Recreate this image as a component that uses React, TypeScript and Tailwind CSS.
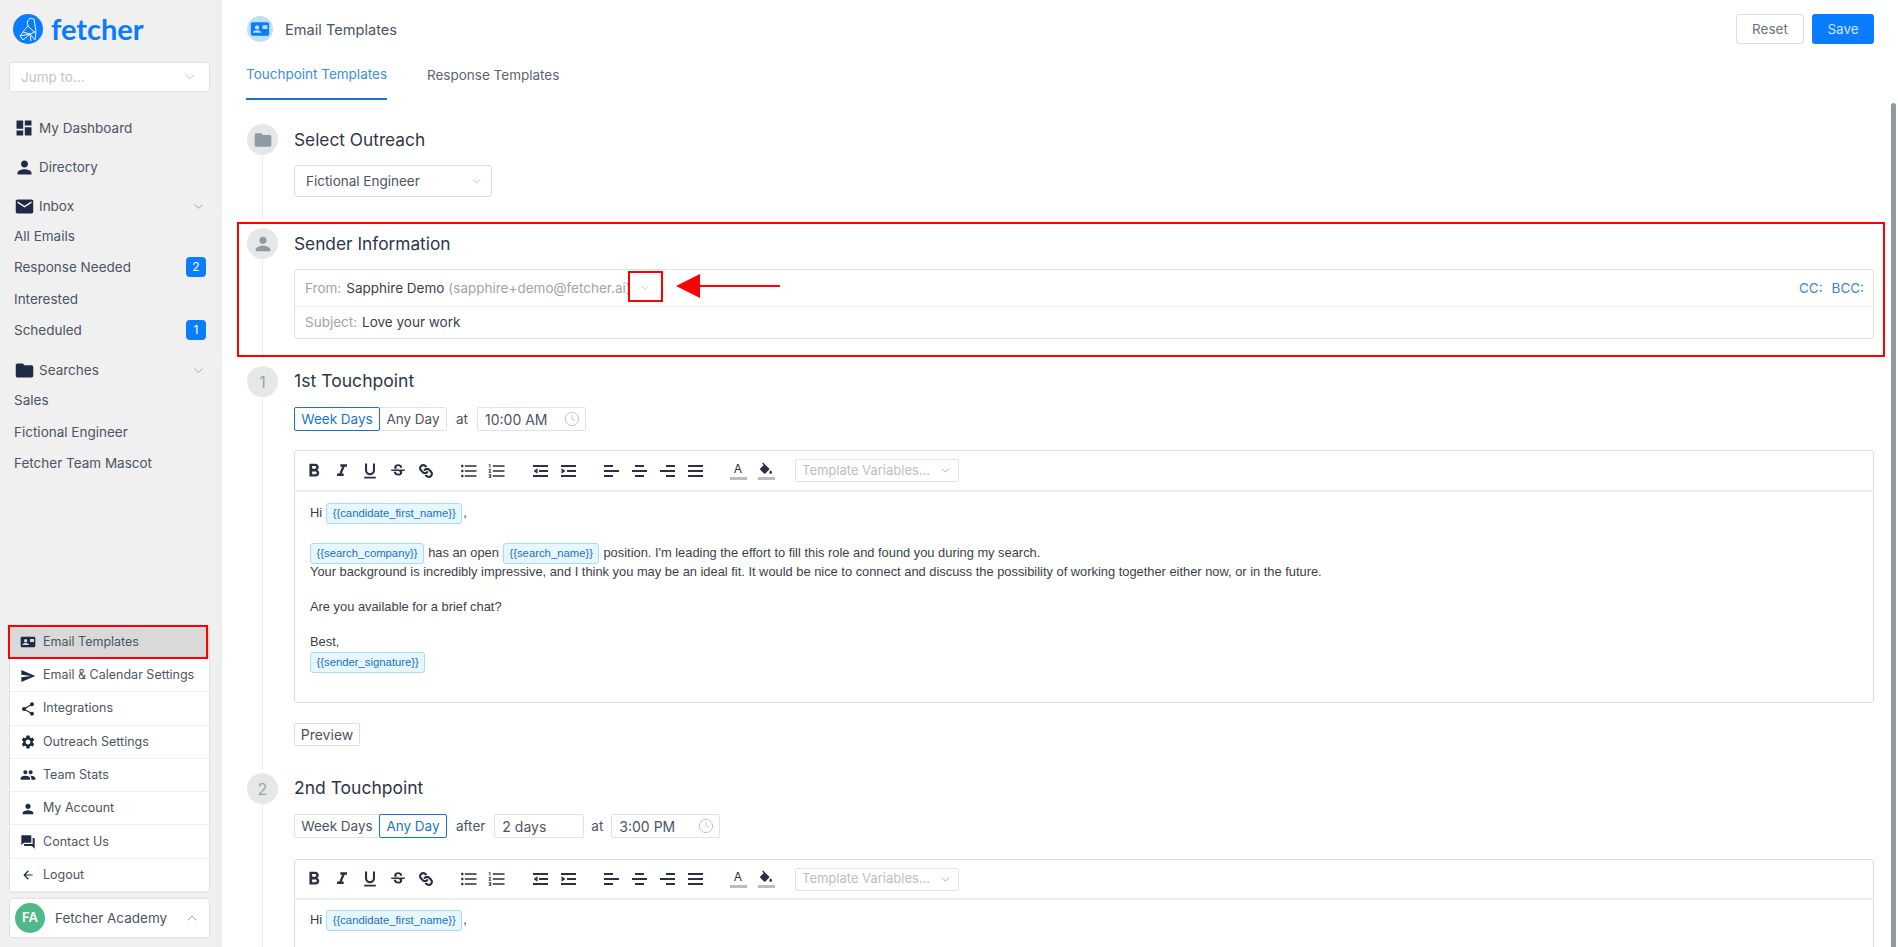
import React from "react";
import { ChevronDown, ChevronUp, Clock } from "lucide-react";
import {
  MdDashboard, MdPerson, MdEmail, MdFolder, MdSend, MdShare, MdSettings, MdPeople, MdForum, MdArrowBack,
  MdFormatBold, MdFormatItalic, MdFormatUnderlined, MdStrikethroughS, MdFormatListBulleted, MdFormatListNumbered,
} from "react-icons/md";
import { FaLink } from "react-icons/fa";

function CardIcon({ size = 20, className = "" }: { size?: number; className?: string }) {
  return (
    <svg width={size} height={size} viewBox="0 0 24 24" className={className} fill="currentColor">
      <path fillRule="evenodd" d="M3 4h18a2 2 0 0 1 2 2v12a2 2 0 0 1-2 2H3a2 2 0 0 1-2-2V6a2 2 0 0 1 2-2Zm5.5 3.5a2.6 2.6 0 1 0 0 5.2 2.6 2.6 0 0 0 0-5.2ZM3.5 16.5h10c0-2-3.2-3-5-3s-5 1-5 3ZM15 7.5v4.5h6V7.5h-6Z" />
    </svg>
  );
}

function Logo() {
  return (
    <svg width="30" height="30" viewBox="0 0 30 30">
      <circle cx="15" cy="15" r="15" fill="#0a7cff" />
      <g fill="none" stroke="#fff" strokeWidth="0.9" strokeLinejoin="round">
        <path d="M17 4l4 1 1 6 1 7-1 8" />
        <path d="M17 4l-3 4 1 4-5 6-3 4 3 4" />
        <path d="M15 12l5 5 2 1M10 18l7 2 5-2M7 22l10-2 1 7M10 26l7-6 5 6" />
      </g>
    </svg>
  );
}

function Bars({ rows }: { rows: [number, number][] }) {
  return (
    <svg width="15" height="14" viewBox="0 0 15 14" fill="currentColor">
      {rows.map(([x, w], i) => (
        <rect key={i} x={x} y={1 + i * 5} width={w} height="2" />
      ))}
    </svg>
  );
}

function Indent({ dir }: { dir: "in" | "out" }) {
  return (
    <svg width="15" height="14" viewBox="0 0 15 14" fill="currentColor">
      <rect x="0" y="1" width="15" height="2" />
      <rect x="6" y="6" width="9" height="2" />
      <rect x="0" y="11" width="15" height="2" />
      {dir === "out" ? <path d="M4.5 4.2v5.6L0.5 7Z" /> : <path d="M0.5 4.2v5.6L4.5 7Z" />}
    </svg>
  );
}

function Bucket() {
  return (
    <svg width="16" height="13" viewBox="0 0 24 18" fill="currentColor">
      <path d="M16.56 8.94 7.62 0 6.21 1.41l2.38 2.38-5.15 5.15c-.59.59-.59 1.54 0 2.12l5.5 5.5c.29.29.68.44 1.06.44s.77-.15 1.06-.44l5.5-5.5c.59-.58.59-1.53 0-2.12ZM19 11.5s-2 2.17-2 3.5c0 1.1.9 2 2 2s2-.9 2-2c0-1.33-2-3.5-2-3.5Z" />
    </svg>
  );
}

const inter = "[font-family:Inter,sans-serif]";
const arial = "[font-family:'Liberation_Sans',Arial,sans-serif]";

function SideHead({ icon, label, chevron }: { icon: React.ReactNode; label: string; chevron?: boolean }) {
  return (
    <div className="flex h-[31px] items-center pl-[12px] pr-[16px]">
      <span className="flex w-[24px] justify-center text-[#1f2a44]">{icon}</span>
      <span className="ml-[3px] flex-1 text-[13.5px] text-[#4b5563]">{label}</span>
      {chevron && <ChevronDown size={15} strokeWidth={1.5} className="text-[#9ca3af]" />}
    </div>
  );
}

function SideSub({ label, badge }: { label: string; badge?: string }) {
  return (
    <div className="flex h-[31.3px] items-center pl-[14px] pr-[16px]">
      <span className="flex-1 text-[13.5px] text-[#4b5563]">{label}</span>
      {badge && (
        <span className="flex size-[20px] items-center justify-center rounded-[4px] bg-[#0a7cff] text-[12px] text-white">{badge}</span>
      )}
    </div>
  );
}

function MenuRow({ icon, label, active }: { icon: React.ReactNode; label: string; active?: boolean }) {
  return (
    <div className={`flex h-[33.3px] items-center border-b border-[#f0f0f0] pl-[10px] pt-[1px] last:h-[32px] last:border-b-0 ${active ? "bg-[#d9d9d9]" : ""}`}>
      <span className="flex w-[16px] justify-center text-[#1f2a44]">{icon}</span>
      <span className="ml-[7px] text-[12.5px] text-[#4b5563]">{label}</span>
    </div>
  );
}

function Sidebar() {
  return (
    <aside className="flex h-full w-[222px] shrink-0 flex-col bg-[#f0f0f0]">
      <div className="flex items-center gap-[8px] pl-[13px] pt-[14px]">
        <Logo />
        <span className="text-[29px] font-bold leading-[30px] text-[#0a7cff] [font-family:Lato,sans-serif]">fetcher</span>
      </div>
      <div className="ml-[9px] mr-[12px] mt-[18px] flex h-[30px] items-center justify-between rounded-[3px] border border-[#e2e2e2] bg-white pl-[11px] pr-[12px]">
        <span className="text-[13.5px] text-[#c4c4c4]">Jump to...</span>
        <ChevronDown size={14} strokeWidth={1.5} className="text-[#b5b5b5]" />
      </div>
      <nav className="mt-[20.5px] flex flex-col">
        <SideHead icon={<MdDashboard size={20} />} label="My Dashboard" />
        <div className="mt-[8px]"><SideHead icon={<MdPerson size={21} />} label="Directory" /></div>
        <div className="mb-[-1px] mt-[8px]"><SideHead icon={<MdEmail size={21} />} label="Inbox" chevron /></div>
        <SideSub label="All Emails" />
        <SideSub label="Response Needed" badge="2" />
        <SideSub label="Interested" />
        <SideSub label="Scheduled" badge="1" />
        <div className="mb-[-1px] mt-[9px]"><SideHead icon={<MdFolder size={21} />} label="Searches" chevron /></div>
        <SideSub label="Sales" />
        <SideSub label="Fictional Engineer" />
        <SideSub label="Fetcher Team Mascot" />
      </nav>
      <div className="relative ml-[9px] mr-[12px] mt-auto rounded-[3px] border border-[#e0e0e0] bg-white">
        <MenuRow active icon={<CardIcon size={16} />} label="Email Templates" />
        <MenuRow icon={<MdSend size={16} />} label="Email & Calendar Settings" />
        <MenuRow icon={<MdShare size={16} />} label="Integrations" />
        <MenuRow icon={<MdSettings size={16} />} label="Outreach Settings" />
        <MenuRow icon={<MdPeople size={16} />} label="Team Stats" />
        <MenuRow icon={<MdPerson size={16} />} label="My Account" />
        <MenuRow icon={<MdForum size={16} />} label="Contact Us" />
        <MenuRow icon={<MdArrowBack size={14} />} label="Logout" />
        <div className="absolute left-[-2px] top-[-1px] h-[34px] w-[200px] border-2 border-[#ff0000]" />
      </div>
      <div className="mb-[9px] ml-[9px] mr-[12px] mt-[5px] flex h-[40px] items-center rounded-[3px] border border-[#e0e0e0] bg-white pl-[5px] pr-[9px]">
        <span className="flex size-[30px] items-center justify-center rounded-full bg-[#4fb98a] text-[13px] font-semibold text-white">FA</span>
        <span className="ml-[10px] flex-1 text-[13.5px] text-[#4b5563]">Fetcher Academy</span>
        <ChevronUp size={16} strokeWidth={1.5} className="text-[#9ca3af]" />
      </div>
    </aside>
  );
}

function Step({ marker, title, titleClass = "", className = "", children }: { marker: React.ReactNode; title: string; titleClass?: string; className?: string; children: React.ReactNode }) {
  return (
    <section className={`flex ${className}`}>
      <div className="flex w-[31px] shrink-0 flex-col items-center">
        <span className="flex size-[31px] shrink-0 items-center justify-center rounded-full bg-[#e6e8e8] text-[16px] text-[#9aa3ab]">{marker}</span>
        <span className="mb-[4px] w-px flex-1 bg-[#ececec]" />
      </div>
      <div className="ml-[16px] min-w-0 flex-1">
        <h2 className={`flex h-[31px] items-center font-normal text-[#2d3748] ${titleClass}`}>{title}</h2>
        {children}
      </div>
    </section>
  );
}

function Segment({ active }: { active: "week" | "any" }) {
  const base = "flex h-[24px] items-center justify-center border text-[13.5px]";
  const on = "z-10 rounded-[2px] border-[#1677c9] text-[#1677c9]";
  const off = "border-[#e2e2e2] text-[#4b5563]";
  return (
    <div className="flex">
      <span className={`${base} w-[86px] rounded-l-[2px] ${active === "week" ? on : off}`}>Week Days</span>
      <span className={`${base} ml-[-1px] w-[68px] rounded-r-[2px] ${active === "any" ? on : off}`}>Any Day</span>
    </div>
  );
}

function TimeBox({ value, w }: { value: string; w: string }) {
  return (
    <div className={`flex h-[24px] items-center justify-between rounded-[2px] border border-[#e2e2e2] pl-[7px] pr-[5px] text-[14px] text-[#4b5563] ${w}`}>
      <span>{value}</span>
      <Clock size={16} strokeWidth={1.25} className="text-[#b8b8b8]" />
    </div>
  );
}

function ToolBtn({ children }: { children: React.ReactNode }) {
  return <span className="flex h-[24px] w-[28px] items-center justify-center text-[#2a3142]">{children}</span>;
}

function Toolbar({ h }: { h: string }) {
  return (
    <div className={`flex items-center border-b-2 border-[#eeeeee] pl-[5px] ${h}`}>
      <div className="flex">
        <ToolBtn><MdFormatBold size={22} /></ToolBtn>
        <ToolBtn><MdFormatItalic size={20} /></ToolBtn>
        <ToolBtn><MdFormatUnderlined size={20} /></ToolBtn>
        <ToolBtn><MdStrikethroughS size={18} /></ToolBtn>
        <ToolBtn><FaLink size={14} className="rotate-[90deg]" /></ToolBtn>
      </div>
      <div className="ml-[15px] flex">
        <ToolBtn><MdFormatListBulleted size={20} /></ToolBtn>
        <ToolBtn><MdFormatListNumbered size={20} /></ToolBtn>
      </div>
      <div className="ml-[15px] flex">
        <ToolBtn><Indent dir="out" /></ToolBtn>
        <ToolBtn><Indent dir="in" /></ToolBtn>
      </div>
      <div className="ml-[15px] flex">
        <ToolBtn><Bars rows={[[0, 9], [0, 15], [0, 9]]} /></ToolBtn>
        <ToolBtn><Bars rows={[[3, 9], [0, 15], [3, 9]]} /></ToolBtn>
        <ToolBtn><Bars rows={[[6, 9], [0, 15], [6, 9]]} /></ToolBtn>
        <ToolBtn><Bars rows={[[0, 15], [0, 15], [0, 15]]} /></ToolBtn>
      </div>
      <div className="ml-[15px] flex">
        <ToolBtn>
          <span className="flex flex-col items-center">
            <span className="text-[12px] leading-[14px] text-[#2a3142]">A</span>
            <span className="mt-[1px] h-[3px] w-[17px] bg-[#bdbdbd]" />
          </span>
        </ToolBtn>
        <ToolBtn>
          <span className="flex flex-col items-center">
            <Bucket />
            <span className="mt-[2px] h-[3px] w-[17px] bg-[#bdbdbd]" />
          </span>
        </ToolBtn>
      </div>
      <div className="ml-[15px] flex h-[23px] w-[164px] items-center justify-between rounded-[2px] border border-[#e2e2e2] pl-[6px] pr-[6px] text-[13px] text-[#bdbdbd]">
        <span>Template Variables...</span>
        <ChevronDown size={13} strokeWidth={1.5} className="text-[#9a9a9a]" />
      </div>
    </div>
  );
}

function Chip({ children }: { children: string }) {
  return (
    <span className={`inline-flex h-[21px] items-center rounded-[3px] border border-[#a6dcf7] bg-[#e6f7ff] px-[5.5px] align-middle text-[11.3px] text-[#1a6fc4] ${arial}`}>
      {children}
    </span>
  );
}

const body = `${arial} text-[12.86px] text-[#3a3f4b]`;

function Greeting() {
  return (
    <div className={`${body} flex h-[22px] items-center`}>
      Hi<span className="ml-[4px]"><Chip>{"{{candidate_first_name}}"}</Chip></span><span className="ml-[1px]">,</span>
    </div>
  );
}

function App() {
  return (
    <div className={`flex h-[947px] w-full overflow-hidden bg-white ${inter}`}>
      <Sidebar />
      <main className="relative h-full min-w-0 flex-1 overflow-hidden bg-white">
        <header className="flex h-[60px] items-start pl-[25px] pr-[24px] pt-[14px]">
          <span className="mt-[2px] flex size-[26px] items-center justify-center rounded-full bg-[#bfe0fb] text-[#0a7cff]"><CardIcon size={20} /></span>
          <span className="ml-[12px] mt-[6px] text-[14.6px] text-[#4b5563]">Email Templates</span>
          <div className="ml-auto flex gap-[8px]">
            <button className="h-[30px] w-[68px] rounded-[3px] border border-[#dddddd] bg-white text-[13.5px] text-[#6b7280]">Reset</button>
            <button className="h-[30px] w-[62px] rounded-[3px] bg-[#0a7cff] text-[13.5px] text-[#cfe6ff]">Save</button>
          </div>
        </header>
        <div className="flex h-[40px] pl-[24px]">
          <span className="flex h-[40px] w-[141px] items-center justify-center border-b-2 border-[#1677c9] pb-[9px] text-[13.5px] text-[#3b8fdd]">Touchpoint Templates</span>
          <span className="ml-[40px] flex h-[40px] items-center pb-[9px] text-[13.5px] text-[#5b6472]">Response Templates</span>
        </div>

        <div className="pl-[25px] pr-[24px] pt-[24px]">
          <Step marker={<MdFolder size={20} className="text-[#8e9aa5]" />} title="Select Outreach" titleClass="pt-[1px] text-[17.3px]" className="pb-[5px]">
            <div className="mb-[26px] mt-[10px] flex h-[32px] w-[198px] items-center justify-between rounded-[3px] border border-[#dddddd] pl-[11px] pr-[8px] text-[13.5px] text-[#4b5563]">
              <span>Fictional Engineer</span>
              <ChevronDown size={13} strokeWidth={1.25} className="text-[#a0a0a0]" />
            </div>
          </Step>

          <div className="relative">
            <Step marker={<MdPerson size={22} className="text-[#8e9aa5]" />} title="Sender Information" titleClass="pt-[1px] text-[17.3px]">
              <div className="relative mb-[27px] mt-[10px] rounded-[3px] border border-[#e0e0e0] text-[13.5px]">
                <div className="flex h-[37px] items-center border-b border-[#f2f2f2] pl-[10px] pr-[9px]">
                  <span className="text-[#a3a3a3]">From:</span>
                  <span className="ml-[5px] text-[#3a3f4b]">Sapphire Demo</span>
                  <span className="ml-[4px] w-[184px] overflow-hidden whitespace-nowrap text-[#a3a3a3]">(sapphire+demo@fetcher.ai)</span>
                  <ChevronDown size={12} strokeWidth={1.25} className="ml-[7px] text-[#a0a0a0]" />
                  <span className="ml-auto text-[#3b86d9]">CC:</span>
                  <span className="ml-[9px] text-[#3b86d9]">BCC:</span>
                </div>
                <div className="flex h-[31px] items-center pl-[10px]">
                  <span className="text-[#a3a3a3]">Subject:</span>
                  <span className="ml-[5px] text-[#3a3f4b]">Love your work</span>
                </div>
                <div className="absolute left-[333px] top-[1px] h-[31px] w-[35px] border-2 border-[#ff0000]" />
                <svg className="absolute left-[381px] top-[4px]" width="106" height="24" viewBox="0 0 106 24">
                  <path d="M0 12 24 0v24Z" fill="#ff0000" />
                  <rect x="24" y="11" width="80" height="2" fill="#ff0000" />
                </svg>
              </div>
            </Step>
            <div className="absolute bottom-[9px] left-[-10px] right-[-11px] top-[-6px] border-2 border-[#ff0000]" />
          </div>

          <Step marker="1" title="1st Touchpoint" titleClass="text-[17.6px]">
            <div className="mt-[10px] flex items-center">
              <Segment active="week" />
              <span className="ml-[9px] text-[13.5px] text-[#4b5563]">at</span>
              <div className="ml-[9px]"><TimeBox value="10:00 AM" w="w-[109px]" /></div>
            </div>
            <div className="mt-[19px] rounded-[3px] border border-[#dddddd]">
              <Toolbar h="h-[41px]" />
              <div className="h-[210px] pl-[15px] pt-[10px]">
                <Greeting />
                <div className={`${body} mt-[19px] flex h-[20px] items-center`}>
                  <Chip>{"{{search_company}}"}</Chip>
                  <span className="ml-[4px]">has an open</span>
                  <span className="ml-[4px]"><Chip>{"{{search_name}}"}</Chip></span>
                  <span className="ml-[4px]">position. I'm leading the effort to fill this role and found you during my search.</span>
                </div>
                <p className={`${body} h-[17px] leading-[17px]`}>Your background is incredibly impressive, and I think you may be an ideal fit. It would be nice to connect and discuss the possibility of working together either now, or in the future.</p>
                <p className={`${body} mt-[18px] h-[17px] leading-[17px]`}>Are you available for a brief chat?</p>
                <p className={`${body} mt-[18px] h-[17px] leading-[17px]`}>Best,</p>
                <div className="mt-[2px] flex h-[21px] items-center"><Chip>{"{{sender_signature}}"}</Chip></div>
              </div>
            </div>
            <button className="mb-[27px] mt-[20px] flex h-[23px] w-[66px] items-center justify-center rounded-[2px] border border-[#dddddd] text-[14px] text-[#4b5563]">Preview</button>
          </Step>

          <Step marker="2" title="2nd Touchpoint" titleClass="text-[17.5px]">
            <div className="mt-[10px] flex items-center">
              <Segment active="any" />
              <span className="ml-[9px] text-[13.5px] text-[#4b5563]">after</span>
              <div className="ml-[9px] flex h-[24px] w-[90px] items-center rounded-[2px] border border-[#e2e2e2] pl-[7px] text-[14px] text-[#4b5563]">2 days</div>
              <span className="ml-[7px] text-[13.5px] text-[#4b5563]">at</span>
              <div className="ml-[8px]"><TimeBox value="3:00 PM" w="w-[109px]" /></div>
            </div>
            <div className="mt-[21px] rounded-[3px] border border-[#dddddd]">
              <Toolbar h="h-[40px]" />
              <div className="h-[212px] pl-[15px] pt-[9px]">
                <Greeting />
              </div>
            </div>
          </Step>
        </div>

        <div className="absolute bottom-0 right-[2px] top-[103px] w-[5px] rounded-t-[3px] bg-[#8f9aa3]" />
      </main>
    </div>
  );
}

export default App;
